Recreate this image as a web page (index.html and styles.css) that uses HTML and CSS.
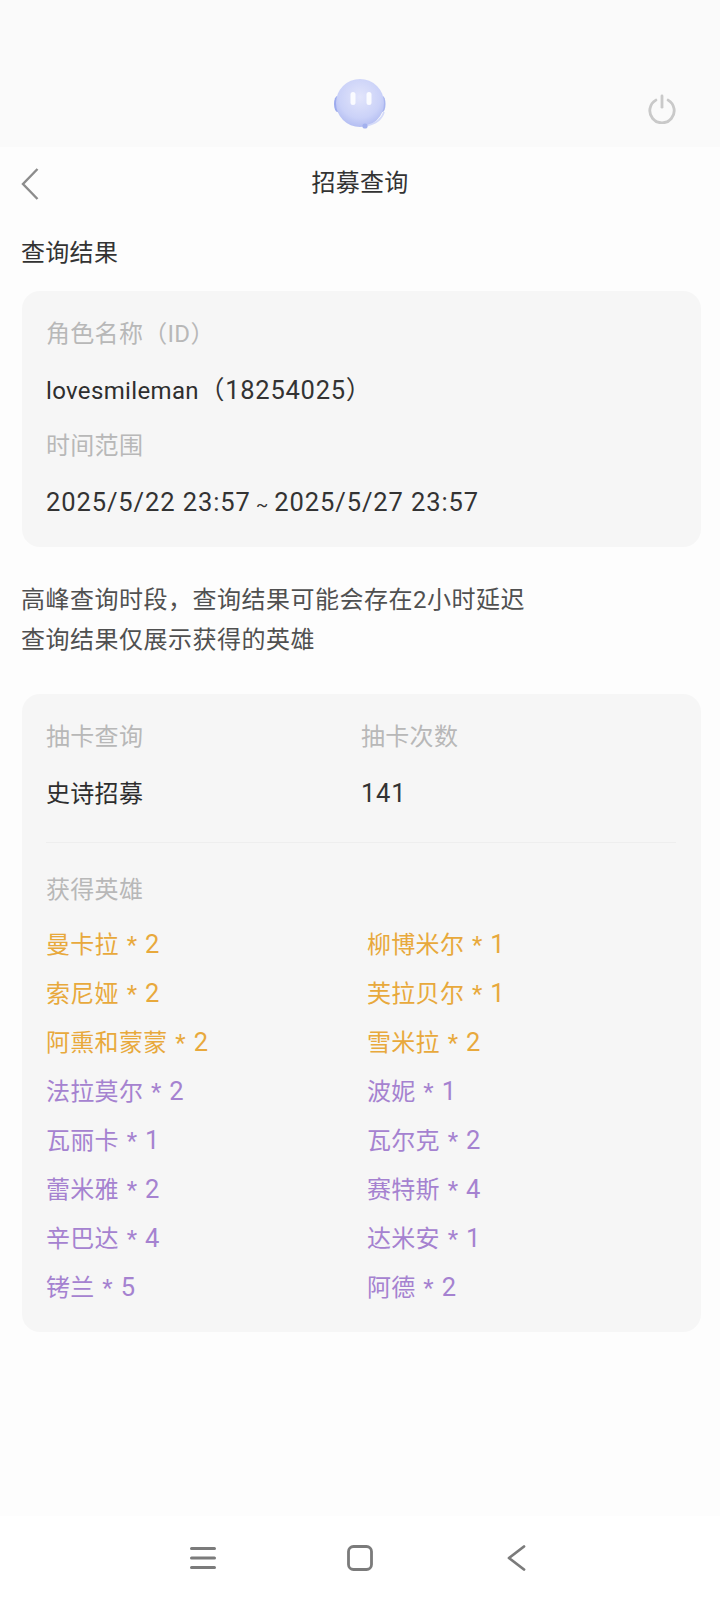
FILE: index.html
```html
<!DOCTYPE html>
<html lang="zh-CN">
<head>
<meta charset="utf-8">
<title>招募查询</title>
<link rel="stylesheet" href="styles.css">
</head>
<body>
<div class="app">
  <header class="top">
    <div></div>
    <svg class="mascot" viewBox="0 0 56 56" width="56" height="56" aria-hidden="true">
      <defs>
        <radialGradient id="face" cx="50%" cy="38%" r="62%">
          <stop offset="0" stop-color="#e2e5fb"/>
          <stop offset="0.7" stop-color="#cbd2f8"/>
          <stop offset="1" stop-color="#b4bef2"/>
        </radialGradient>
      </defs>
      <ellipse cx="5.500" cy="28" rx="3.500" ry="8" fill="#9dabee"/>
      <ellipse cx="50.500" cy="28" rx="3" ry="8" fill="#a9b6ef"/>
      <circle cx="28" cy="27" r="24" fill="url(#face)"/>
      <path d="M52 36c-2 7-9 12-18 14" fill="none" stroke="#d4daf8" stroke-width="1.600"/>
      <circle cx="33" cy="50" r="2.600" fill="#a3b1ee"/>
      <rect x="18.500" y="16" width="5" height="13" rx="2.500" fill="#fafbff"/>
      <rect x="34.500" y="16" width="5" height="13" rx="2.500" fill="#fafbff"/>
    </svg>
    <svg class="power" viewBox="0 0 32 32" width="30" height="30" aria-hidden="true">
      <path d="M9.500 6.500a13 13 0 1 0 13 0" fill="none" stroke="#c9c9c9" stroke-width="3" stroke-linecap="round"/>
      <path d="M16 2v12" fill="none" stroke="#c9c9c9" stroke-width="3" stroke-linecap="round"/>
    </svg>
  </header>

  <main class="page">
    <nav class="nav">
      <svg class="nav-back" viewBox="0 0 20 34" width="20" height="34" aria-hidden="true">
        <path d="M17.500 2L3 17l14.500 15" fill="none" stroke="#8c8c8c" stroke-width="2.400"/>
      </svg>
      <h1 class="nav-title">招募查询</h1>
    </nav>

    <h2 class="section-title">查询结果</h2>

    <section class="card card-info">
      <div class="label">角色名称（ID）</div>
      <div class="value"><span class="name">lovesmileman</span><span class="num">（18254025）</span></div>
      <div class="label">时间范围</div>
      <div class="value"><span class="num date">2025/5/22 23:57 <span class="tilde">~</span> 2025/5/27 23:57</span></div>
    </section>

    <p class="notes">高峰查询时段，查询结果可能会存在2小时延迟<br>查询结果仅展示获得的英雄</p>

    <section class="card card-result">
      <div class="summary">
        <div>
          <div class="label">抽卡查询</div>
          <div class="value">史诗招募</div>
        </div>
        <div>
          <div class="label">抽卡次数</div>
          <div class="value"><span class="num">141</span></div>
        </div>
      </div>
      <div class="divider"></div>
      <div class="label">获得英雄</div>
      <ul class="heroes">
        <li class="gold">曼卡拉 * <span class="qty">2</span></li><li class="gold">柳博米尔 * <span class="qty">1</span></li>
        <li class="gold">索尼娅 * <span class="qty">2</span></li><li class="gold">芙拉贝尔 * <span class="qty">1</span></li>
        <li class="gold">阿熏和蒙蒙 * <span class="qty">2</span></li><li class="gold">雪米拉 * <span class="qty">2</span></li>
        <li class="purple">法拉莫尔 * <span class="qty">2</span></li><li class="purple">波妮 * <span class="qty">1</span></li>
        <li class="purple">瓦丽卡 * <span class="qty">1</span></li><li class="purple">瓦尔克 * <span class="qty">2</span></li>
        <li class="purple">蕾米雅 * <span class="qty">2</span></li><li class="purple">赛特斯 * <span class="qty">4</span></li>
        <li class="purple">辛巴达 * <span class="qty">4</span></li><li class="purple">达米安 * <span class="qty">1</span></li>
        <li class="purple">铐兰 * <span class="qty">5</span></li><li class="purple">阿德 * <span class="qty">2</span></li>
      </ul>
    </section>
  </main>

  <footer class="sysbar">
    <svg viewBox="0 0 26 26" width="26" height="26" aria-hidden="true">
      <path d="M1.500 3.500h23M1.500 13h23M1.500 22.500h23" fill="none" stroke="#7b7b7b" stroke-width="3" stroke-linecap="round"/>
    </svg>
    <svg viewBox="0 0 26 26" width="26" height="26" aria-hidden="true">
      <rect x="1.500" y="1.500" width="23" height="23" rx="5" fill="none" stroke="#7b7b7b" stroke-width="2.800"/>
    </svg>
    <svg viewBox="0 0 26 26" width="26" height="26" aria-hidden="true">
      <path d="M20 1.500L5 13l15 11.500" fill="none" stroke="#7b7b7b" stroke-width="2.800" stroke-linecap="round" stroke-linejoin="round"/>
    </svg>
  </footer>
</div>
</body>
</html>
```
FILE: styles.css
```css
* { box-sizing: border-box; }
html, body { margin: 0; padding: 0; }
body {
  width: 720px;
  height: 1600px;
  overflow: hidden;
  background: #fdfdfd;
  font-family: "Roboto", "Noto Sans CJK SC", sans-serif;
  color: #333;
  letter-spacing: 0.3px;
}
.app { display: flex; flex-direction: column; height: 1600px; }

.top {
  height: 147px;
  flex: none;
  background: #fafafa;
  padding-right: 43px;
  display: grid;
  grid-template-columns: 1fr 56px 1fr;
  align-items: start;
}
.mascot { margin-top: 76px; margin-left: 21px; filter: blur(0.6px); }
.power { margin-top: 94px; justify-self: end; filter: blur(0.4px); }

.page { flex: 1; padding: 0 19px 0 22px; }

.nav {
  height: 72px;
  display: flex;
  align-items: center;
  justify-content: center;
  position: relative;
}
.nav-back { position: absolute; left: -2px; top: 20px; }
.nav-title { margin: 0 0 0 -3px; font-size: 24px; font-weight: 400; line-height: 72px; color: #333; }

.section-title {
  margin: 0 0 0 -1px;
  padding-top: 16px;
  font-size: 24px;
  font-weight: 400;
  line-height: 36px;
  color: #333;
}

.card { background: #f6f6f6; border-radius: 18px; padding: 15px 24px 0; }
.card-info { margin-top: 20px; height: 256px; }
.card-result { margin-top: 34px; height: 638px; }

.label { font-size: 24px; line-height: 56px; color: #b8b8b8; }
.value { font-size: 24px; line-height: 56px; padding-top: 1px; margin-bottom: -1px; color: #2e2e2e; }
.name { letter-spacing: 0.35px; }
.num { font-size: 25.5px; line-height: 1; letter-spacing: 0.75px; color: #333; }
.date { letter-spacing: 0.9px; }
.tilde { font-size: 18px; margin: 0 -2px; }

.notes {
  margin: 33px 0 0 -1px;
  font-size: 24px;
  line-height: 40px;
  letter-spacing: 0.5px;
  color: #505050;
}

.summary { display: grid; grid-template-columns: 315px 1fr; }
.divider { height: 1px; background: #eeeeee; margin: 21px 0 19px; width: 630px; }

.heroes {
  list-style: none;
  margin: 3px 0 0;
  padding: 0;
  display: grid;
  grid-template-columns: 321px 1fr;
  grid-auto-rows: 49px;
  font-size: 24px;
  line-height: 49px;
  word-spacing: 1.5px;
}
.qty { font-size: 25.5px; line-height: 1; }
.gold { color: #e8a93c; }
.purple { color: #a582d0; }

.sysbar {
  height: 84px;
  flex: none;
  background: #ffffff;
  display: flex;
  align-items: center;
  justify-content: center;
  gap: 131px;
}
```
